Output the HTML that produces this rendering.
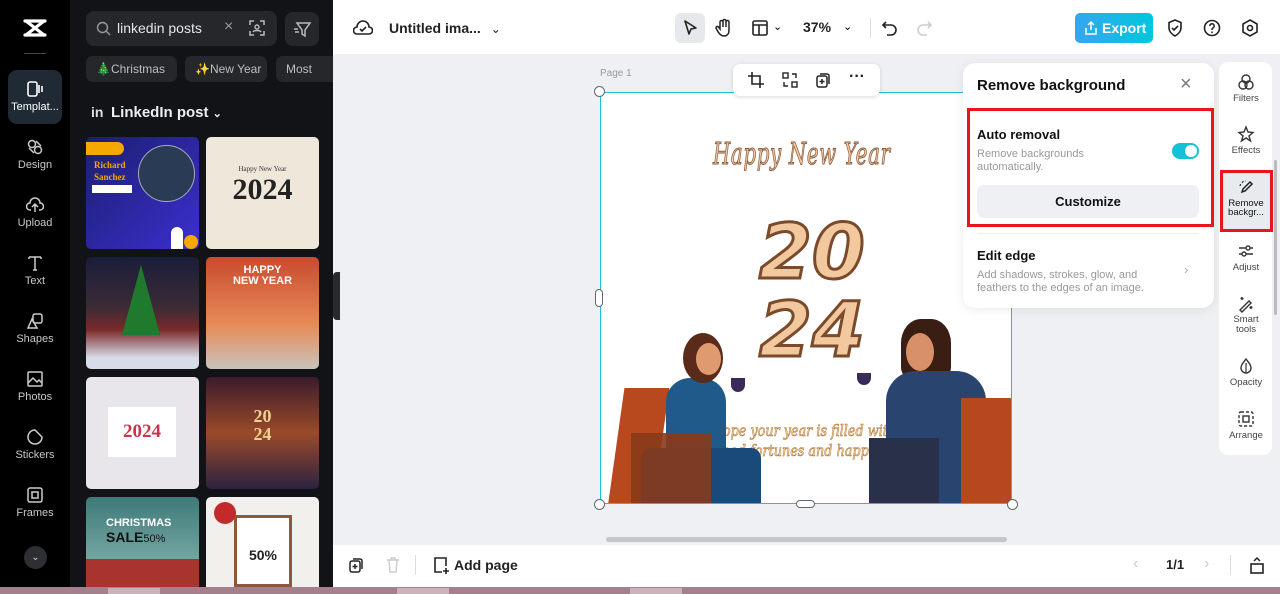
<!DOCTYPE html>
<html><head><meta charset="utf-8"><style>
*{box-sizing:border-box;margin:0;padding:0}
body{width:1280px;height:594px;overflow:hidden;position:relative;font-family:"Liberation Sans",sans-serif;background:#eef0f3}
.abs{position:absolute}
.rail{left:0;top:0;width:70px;height:587px;background:#000}
.panel{left:70px;top:0;width:263px;height:587px;background:#121316}
.ri{position:absolute;left:0;width:70px;text-align:center;color:#c8c8cc;font-size:11px}
.ri svg{display:block;margin:0 auto 3px}
.chip{position:absolute;top:56px;height:26px;background:#26272b;border-radius:7px;color:#bdbdc2;font-size:12px;line-height:26px;padding-left:10px}
.th{position:absolute;width:113px;height:112px;border-radius:5px;overflow:hidden}
.top{left:333px;top:0;width:947px;height:54px;background:#fff}
.bot{left:333px;top:545px;width:947px;height:42px;background:#fff}
.task{left:0;top:587px;width:1280px;height:7px;background:#a4808e}
.tool{position:absolute;width:50px;text-align:center;font-size:9.5px;color:#444}
.tool svg{display:block;margin:0 auto 2px}
</style></head><body>
<div class="abs" style="left:0;top:0;width:1280px;height:2px;background:#555"></div>
<div class="abs rail">
 <svg class="abs" style="left:22px;top:18px" width="26" height="20" viewBox="0 0 26 20"><path d="M3 3h20M3 17h20M4 3l18 14M22 3L4 17" fill="none" stroke="#fff" stroke-width="3.2" stroke-linejoin="round" stroke-linecap="round"/></svg>
 <div class="abs" style="left:24px;top:53px;width:22px;height:1px;background:#444"></div>
 <div class="abs" style="left:8px;top:70px;width:54px;height:54px;background:#1f2a35;border-radius:9px"></div>
 <div class="ri" style="top:80px;color:#fff"><svg width="18" height="18" viewBox="0 0 18 18"><rect x="2" y="2" width="9" height="14" rx="2" fill="none" stroke="#fff" stroke-width="1.6"/><path d="M13 5v8M16 6v6" stroke="#fff" stroke-width="1.6"/></svg>Templat...</div>
 <div class="ri" style="top:138px"><svg width="18" height="18" viewBox="0 0 18 18"><circle cx="6" cy="6" r="3.5" fill="none" stroke="#ccc" stroke-width="1.5"/><circle cx="12" cy="12" r="3.5" fill="none" stroke="#ccc" stroke-width="1.5"/><path d="M10 3l5 5M3 10l5 5" stroke="#ccc" stroke-width="1.5"/></svg>Design</div>
 <div class="ri" style="top:196px"><svg width="18" height="18" viewBox="0 0 18 18"><path d="M5 14H4a3.5 3.5 0 0 1 0-7 5 5 0 0 1 10 0 3.5 3.5 0 0 1 0 7h-1M9 16V9M6 11l3-3 3 3" fill="none" stroke="#ccc" stroke-width="1.5"/></svg>Upload</div>
 <div class="ri" style="top:254px"><svg width="18" height="18" viewBox="0 0 18 18"><path d="M3 3h12M9 3v13M3 3v2M15 3v2M7 16h4" fill="none" stroke="#ccc" stroke-width="1.5"/></svg>Text</div>
 <div class="ri" style="top:312px"><svg width="18" height="18" viewBox="0 0 18 18"><rect x="7" y="2" width="9" height="9" rx="2" fill="none" stroke="#ccc" stroke-width="1.5"/><path d="M6 7l-4 9h9z" fill="none" stroke="#ccc" stroke-width="1.5"/></svg>Shapes</div>
 <div class="ri" style="top:370px"><svg width="18" height="18" viewBox="0 0 18 18"><rect x="2" y="2" width="14" height="14" rx="1" fill="none" stroke="#ccc" stroke-width="1.5"/><path d="M2 13l5-5 4 4 2-2 3 3" fill="none" stroke="#ccc" stroke-width="1.5"/></svg>Photos</div>
 <div class="ri" style="top:428px"><svg width="18" height="18" viewBox="0 0 18 18"><path d="M9 2a7 7 0 1 0 7 7l-7-7z" fill="none" stroke="#ccc" stroke-width="1.5"/></svg>Stickers</div>
 <div class="ri" style="top:486px"><svg width="18" height="18" viewBox="0 0 18 18"><rect x="2" y="2" width="14" height="14" rx="2" fill="none" stroke="#ccc" stroke-width="1.5"/><rect x="6" y="6" width="6" height="6" fill="none" stroke="#ccc" stroke-width="1.5"/></svg>Frames</div>
 <div class="abs" style="left:24px;top:546px;width:23px;height:23px;border-radius:50%;background:#2e2f33;color:#ccc;font-size:10px;text-align:center;line-height:23px">⌄</div>
</div>
<div class="abs panel">
 <div class="abs" style="left:16px;top:11px;width:191px;height:35px;background:#26272b;border-radius:8px"></div>
 <svg class="abs" style="left:26px;top:21px" width="15" height="15" viewBox="0 0 15 15"><circle cx="6.5" cy="6.5" r="5" fill="none" stroke="#999" stroke-width="1.4"/><path d="M10 10l4 4" stroke="#999" stroke-width="1.4"/></svg>
 <div class="abs" style="left:47px;top:20px;color:#e6e6ea;font-size:14px">linkedin posts</div>
 <div class="abs" style="left:154px;top:18px;color:#999;font-size:16px">×</div>
 <svg class="abs" style="left:178px;top:19px" width="18" height="18" viewBox="0 0 18 18"><path d="M2 6V2h4M12 2h4v4M16 12v4h-4M6 16H2v-4" fill="none" stroke="#bbb" stroke-width="1.5"/><circle cx="9" cy="8" r="2" fill="none" stroke="#bbb" stroke-width="1.4"/><path d="M5 13c1-2 7-2 8 0" fill="none" stroke="#bbb" stroke-width="1.4"/></svg>
 <div class="abs" style="left:215px;top:12px;width:34px;height:34px;background:#26272b;border-radius:8px"></div>
 <svg class="abs" style="left:222px;top:19px" width="20" height="20" viewBox="0 0 20 20"><path d="M5 4h13l-5 7v6l-3-2v-4zM2 10h4M3 13h4" fill="none" stroke="#bbb" stroke-width="1.5"/></svg>
 <div class="chip" style="left:16px;width:91px"><span style="color:#3c3">🎄</span>Christmas</div>
 <div class="chip" style="left:115px;width:82px">✨New Year</div>
 <div class="chip" style="left:206px;width:57px;border-radius:7px 0 0 7px">Most</div>
 <div class="abs" style="left:21px;top:104px;color:#ddd;font-weight:bold;font-size:14px">in</div>
 <div class="abs" style="left:41px;top:104px;color:#eee;font-weight:bold;font-size:15px">LinkedIn post <span style="font-size:11px">⌄</span></div>
 <div class="th" style="left:16px;top:137px;background:linear-gradient(135deg,#1b1f6e,#3b2fd0)"><div class="abs" style="left:0;top:5px;width:38px;height:13px;background:#f5a800;border-radius:0 7px 7px 0"></div><div class="abs" style="left:8px;top:22px;color:#f5a800;font:bold 9px 'Liberation Serif',serif;line-height:12px">Richard<br>Sanchez</div><div class="abs" style="left:6px;top:48px;width:40px;height:8px;background:#fff"></div><div class="abs" style="left:52px;top:8px;width:57px;height:57px;border-radius:50%;background:#2a3b55;border:1px solid #aab"></div><div class="abs" style="left:85px;top:90px;width:12px;height:22px;background:#fff;border-radius:6px 6px 0 0"></div><div class="abs" style="left:98px;top:98px;width:14px;height:14px;background:#f5a800;border-radius:50%"></div></div>
 <div class="th" style="left:136px;top:137px;background:#efe7d9"><div class="abs" style="left:0;top:36px;width:113px;text-align:center;font:bold 30px 'Liberation Serif',serif;color:#222">2024</div><div class="abs" style="left:0;top:28px;width:113px;text-align:center;font:7px 'Liberation Serif',serif;color:#333">Happy New Year</div></div>
 <div class="th" style="left:16px;top:257px;background:linear-gradient(#1a1d3a 0%,#3b2b35 45%,#7a2a2a 65%,#d8dbe8 90%)"><div class="abs" style="left:36px;top:8px;border-left:19px solid transparent;border-right:19px solid transparent;border-bottom:70px solid #1f7a2d"></div></div>
 <div class="th" style="left:136px;top:257px;background:linear-gradient(#c94a30,#e68a55 60%,#c9c3bb)"><div class="abs" style="left:0;top:8px;width:113px;text-align:center;color:#fff;font:bold 11px 'Liberation Sans';line-height:11px">HAPPY<br>NEW YEAR</div></div>
 <div class="th" style="left:16px;top:377px;background:#e8e6ea"><div class="abs" style="left:22px;top:30px;width:68px;height:50px;background:#fff"></div><div class="abs" style="left:22px;top:44px;width:68px;text-align:center;font:bold 19px 'Liberation Serif',serif;color:#c8364e">2024</div></div>
 <div class="th" style="left:136px;top:377px;background:linear-gradient(#3b1b2c,#9a4a2a 50%,#2c2240)"><div class="abs" style="left:0;top:30px;width:113px;text-align:center;font:bold 18px 'Liberation Serif',serif;color:#f0d090;line-height:18px">20<br>24</div></div>
 <div class="th" style="left:16px;top:497px;height:90px;border-radius:5px 5px 0 0;background:linear-gradient(#3d7a78,#8db8b5)"><div class="abs" style="left:20px;top:20px;color:#fff;font:bold 11px 'Liberation Sans'">CHRISTMAS</div><div class="abs" style="left:20px;top:32px;color:#111;font:bold 14px 'Liberation Sans'">SALE<span style="font-weight:normal;font-size:11px">50%</span></div><div class="abs" style="left:0;top:62px;width:113px;height:28px;background:#a8342e"></div></div>
 <div class="th" style="left:136px;top:497px;height:90px;border-radius:5px 5px 0 0;background:#f2f0ec"><div class="abs" style="left:28px;top:18px;width:58px;height:72px;border:3px solid #8a5a3a;background:#fff"></div><div class="abs" style="left:8px;top:5px;width:22px;height:22px;border-radius:50%;background:#c42a2a"></div><div class="abs" style="left:28px;top:50px;width:58px;text-align:center;font:bold 14px 'Liberation Sans';color:#222">50%</div></div>
 <div class="abs" style="left:263px;top:272px;width:7px;height:48px;background:#2a2a2e;border-radius:4px 0 0 4px"></div>
</div>
<div class="abs top">
 <svg class="abs" style="left:20px;top:18px" width="20" height="18" viewBox="0 0 20 18"><path d="M5 16H4a3.5 3.5 0 0 1 0-7 6 6 0 0 1 12 0 3.5 3.5 0 0 1 0 7H5z" fill="none" stroke="#222" stroke-width="1.6"/><path d="M7 11l2 2 4-4" fill="none" stroke="#222" stroke-width="1.6"/></svg>
 <div class="abs" style="left:56px;top:20px;font-size:14px;font-weight:bold;color:#222">Untitled ima... <span style="font-weight:normal;font-size:12px;margin-left:6px">⌄</span></div>
 <div class="abs" style="left:342px;top:13px;width:30px;height:30px;background:#e6e8ec;border-radius:6px"></div>
 <svg class="abs" style="left:349px;top:19px" width="17" height="18" viewBox="0 0 17 18"><path d="M3 2l11 7-5 1-2 5z" fill="none" stroke="#222" stroke-width="1.6" stroke-linejoin="round"/></svg>
 <svg class="abs" style="left:382px;top:18px" width="18" height="20" viewBox="0 0 18 20"><path d="M5 11V4a1.5 1.5 0 0 1 3 0v5V3a1.5 1.5 0 0 1 3 0v6V4a1.5 1.5 0 0 1 3 0v8c0 4-2 6-5 6s-5-2-7-6l-1-2a1.4 1.4 0 0 1 2.5-1z" fill="none" stroke="#222" stroke-width="1.5"/></svg>
 <svg class="abs" style="left:418px;top:19px" width="18" height="18" viewBox="0 0 18 18"><rect x="2" y="2" width="14" height="14" rx="1.5" fill="none" stroke="#222" stroke-width="1.6"/><path d="M2 6h14M8 6v10" stroke="#222" stroke-width="1.6"/></svg>
 <div class="abs" style="left:440px;top:20px;font-size:11px">⌄</div>
 <div class="abs" style="left:470px;top:19px;font-size:14px;font-weight:bold;color:#222">37%</div>
 <div class="abs" style="left:510px;top:20px;font-size:11px">⌄</div>
 <div class="abs" style="left:537px;top:18px;width:1px;height:20px;background:#ddd"></div>
 <svg class="abs" style="left:548px;top:19px" width="18" height="18" viewBox="0 0 18 18"><path d="M5 3L2 6l3 3M2 6h8a5 5 0 0 1 0 10H6" fill="none" stroke="#222" stroke-width="1.6"/></svg>
 <svg class="abs" style="left:582px;top:19px" width="18" height="18" viewBox="0 0 18 18"><path d="M13 3l3 3-3 3M16 6H8a5 5 0 0 0 0 10h4" fill="none" stroke="#ccc" stroke-width="1.6"/></svg>
 <div class="abs" style="left:742px;top:13px;width:78px;height:30px;border-radius:5px;background:linear-gradient(90deg,#36a6f0,#00c7dd);color:#fff;font-size:14px;font-weight:bold;line-height:30px;padding-left:27px">Export</div>
 <svg class="abs" style="left:751px;top:20px" width="14" height="16" viewBox="0 0 14 16"><path d="M7 10V2M4 5l3-3 3 3M2 8v6h10V8" fill="none" stroke="#fff" stroke-width="1.5"/></svg>
 <svg class="abs" style="left:833px;top:18px" width="18" height="20" viewBox="0 0 18 20"><path d="M9 2l6 2.5v5c0 4-3 7-6 8.5C6 16.5 3 13.5 3 9.5v-5z" fill="none" stroke="#222" stroke-width="1.6"/><path d="M6 10l2 2 4-4" fill="none" stroke="#222" stroke-width="1.6"/></svg>
 <svg class="abs" style="left:870px;top:19px" width="18" height="18" viewBox="0 0 18 18"><circle cx="9" cy="9" r="7.5" fill="none" stroke="#222" stroke-width="1.6"/><path d="M6.8 7a2.2 2.2 0 1 1 3 2c-.8.4-.8 1-.8 2" fill="none" stroke="#222" stroke-width="1.5"/><circle cx="9" cy="13.3" r=".9" fill="#222"/></svg>
 <svg class="abs" style="left:908px;top:18px" width="18" height="20" viewBox="0 0 18 20"><path d="M9 2l7 4v8l-7 4-7-4V6z" fill="none" stroke="#222" stroke-width="1.6"/><circle cx="9" cy="10" r="2.5" fill="none" stroke="#222" stroke-width="1.6"/></svg>
</div>
<!-- canvas -->
<div class="abs" style="left:600px;top:68px;font-size:10px;color:#999">Page 1</div>
<div class="abs" style="left:600px;top:92px;width:412px;height:412px;background:#fff;border:1.5px solid #1ec0d8;overflow:hidden">
 <div class="abs" style="left:112px;top:44px;font:30px 'DejaVu Serif',serif;font-style:italic;color:#f2c8a2;-webkit-text-stroke:1px #8a5a3a;letter-spacing:1px;transform:scaleX(.66);transform-origin:left;white-space:nowrap">Happy New Year</div>
 <div class="abs" style="left:158px;top:120px;font:bold italic 76px 'DejaVu Sans',sans-serif;color:#f2c89e;-webkit-text-stroke:3px #7a4a2a;line-height:78px">20<br>24</div>
 <div class="abs" style="left:105px;top:328px;font:italic 16px 'DejaVu Serif',serif;color:#fbe0b0;-webkit-text-stroke:.6px #b07030;text-align:center;line-height:20px;transform:scaleX(.8);transform-origin:left;white-space:nowrap">Hope your year is filled with<br>&nbsp;&nbsp;good fortunes and happiness</div>
 <div class="abs" style="left:15px;top:295px;width:45px;height:120px;background:#b8481e;transform:skewX(-8deg)"></div>
 <div class="abs" style="left:65px;top:285px;width:60px;height:130px;background:#1f5a8a;border-radius:24px 24px 0 0"></div>
 <div class="abs" style="left:82px;top:240px;width:40px;height:50px;background:#5a2a1a;border-radius:50%"></div>
 <div class="abs" style="left:95px;top:250px;width:25px;height:32px;background:#e09a70;border-radius:50%"></div>
 <div class="abs" style="left:40px;top:355px;width:120px;height:57px;background:#1a4a7a;border-radius:10px 10px 0 0"></div>
 <div class="abs" style="left:30px;top:340px;width:80px;height:70px;background:#8a3a1a;opacity:.9"></div>
 <div class="abs" style="left:300px;top:226px;width:50px;height:60px;background:#3a1e14;border-radius:40% 40% 20% 20%"></div>
 <div class="abs" style="left:305px;top:240px;width:28px;height:38px;background:#d89068;border-radius:50%"></div>
 <div class="abs" style="left:285px;top:278px;width:100px;height:134px;background:#2a4470;border-radius:30px 30px 0 0"></div>
 <div class="abs" style="left:268px;top:345px;width:70px;height:67px;background:#28304a"></div>
 <div class="abs" style="left:360px;top:305px;width:50px;height:107px;background:#b5481e"></div>
 <div class="abs" style="left:130px;top:285px;width:14px;height:14px;background:#3a2a5a;border-radius:0 0 7px 7px"></div>
 <div class="abs" style="left:256px;top:280px;width:14px;height:12px;background:#3a2a5a;border-radius:0 0 7px 7px"></div>
</div>
<div class="abs" style="left:594px;top:86px;width:11px;height:11px;border-radius:50%;background:#fff;border:1px solid #666"></div>
<div class="abs" style="left:594px;top:499px;width:11px;height:11px;border-radius:50%;background:#fff;border:1px solid #666"></div>
<div class="abs" style="left:1007px;top:499px;width:11px;height:11px;border-radius:50%;background:#fff;border:1px solid #666"></div>
<div class="abs" style="left:595px;top:289px;width:8px;height:18px;border-radius:4px;background:#fff;border:1px solid #666"></div>
<div class="abs" style="left:796px;top:500px;width:19px;height:8px;border-radius:4px;background:#fff;border:1px solid #666"></div>
<div class="abs" style="left:733px;top:64px;width:147px;height:32px;background:#fff;border-radius:7px;box-shadow:0 1px 4px rgba(0,0,0,.15)"></div>
<svg class="abs" style="left:747px;top:71px" width="18" height="18" viewBox="0 0 18 18"><path d="M5 1v12h12M1 5h12v12" fill="none" stroke="#222" stroke-width="1.6"/></svg>
<svg class="abs" style="left:781px;top:71px" width="18" height="18" viewBox="0 0 18 18"><rect x="2" y="2" width="5" height="5" fill="none" stroke="#222" stroke-width="1.4"/><rect x="11" y="11" width="5" height="5" fill="none" stroke="#222" stroke-width="1.4"/><path d="M11 3h4v4M7 15H3v-4" fill="none" stroke="#222" stroke-width="1.4"/></svg>
<svg class="abs" style="left:814px;top:71px" width="18" height="18" viewBox="0 0 18 18"><rect x="3" y="5" width="10" height="11" rx="2" fill="none" stroke="#222" stroke-width="1.5"/><path d="M6 3h7a2 2 0 0 1 2 2v8M8 8v5M5.5 10.5h5" fill="none" stroke="#222" stroke-width="1.5"/></svg>
<div class="abs" style="left:849px;top:68px;font-size:16px;font-weight:bold;color:#222">···</div>
<div class="abs" style="left:963px;top:63px;width:251px;height:245px;background:#fff;border-radius:12px;box-shadow:0 2px 10px rgba(0,0,0,.08)"></div>
<div class="abs" style="left:977px;top:77px;font-size:15px;font-weight:bold;color:#111">Remove background</div>
<div class="abs" style="left:1180px;top:73px;font-size:20px;color:#777;font-weight:lighter">×</div>
<div class="abs" style="left:967px;top:108px;width:247px;height:119px;border:3px solid #e8141e"></div>
<div class="abs" style="left:977px;top:127px;font-size:13px;font-weight:bold;color:#111">Auto removal</div>
<div class="abs" style="left:977px;top:148px;font-size:11px;color:#999;line-height:13px">Remove backgrounds<br>automatically.</div>
<div class="abs" style="left:1172px;top:143px;width:27px;height:16px;border-radius:8px;background:#14c2d8"></div>
<div class="abs" style="left:1185px;top:145px;width:12px;height:12px;border-radius:50%;background:#fff"></div>
<div class="abs" style="left:977px;top:185px;width:222px;height:33px;border-radius:7px;background:#eef0f3;text-align:center;line-height:33px;font-size:13px;font-weight:bold;color:#111">Customize</div>
<div class="abs" style="left:977px;top:233px;width:222px;height:1px;background:#eee"></div>
<div class="abs" style="left:977px;top:248px;font-size:13px;font-weight:bold;color:#111">Edit edge</div>
<div class="abs" style="left:977px;top:269px;font-size:11px;color:#999;line-height:13px">Add shadows, strokes, glow, and<br>feathers to the edges of an image.</div>
<div class="abs" style="left:1184px;top:262px;font-size:13px;color:#aaa">›</div>
<div class="abs" style="left:1219px;top:62px;width:53px;height:393px;background:#fff;border-radius:9px"></div>
<div class="abs" style="left:1274px;top:160px;width:3px;height:155px;background:#bbb;border-radius:2px"></div>
<div class="tool" style="left:1221px;top:73px"><svg width="18" height="18" viewBox="0 0 18 18"><circle cx="9" cy="6" r="4" fill="none" stroke="#333" stroke-width="1.4"/><circle cx="6" cy="12" r="4" fill="none" stroke="#333" stroke-width="1.4"/><circle cx="12" cy="12" r="4" fill="none" stroke="#333" stroke-width="1.4"/></svg>Filters</div>
<div class="tool" style="left:1221px;top:125px"><svg width="18" height="18" viewBox="0 0 18 18"><path d="M9 2l2 5 5 .5-4 3.5 1.5 5L9 13l-4.5 3L6 11 2 7.5 7 7z" fill="none" stroke="#333" stroke-width="1.4"/></svg>Effects</div>
<div class="abs" style="left:1220px;top:170px;width:53px;height:62px;border:3px solid #e8141e;background:#e8ebee"></div>
<div class="tool" style="left:1221px;top:179px;color:#111;line-height:9px"><svg width="18" height="18" viewBox="0 0 18 18"><path d="M13 3l2 2-7 7-3 1 1-3z" fill="none" stroke="#222" stroke-width="1.5"/><path d="M3 7a6 6 0 0 1 6-5" fill="none" stroke="#222" stroke-width="1.2" stroke-dasharray="2 2"/></svg>Remove<br>backgr...</div>
<div class="tool" style="left:1221px;top:242px"><svg width="18" height="18" viewBox="0 0 18 18"><path d="M2 6h14M2 12h14" stroke="#333" stroke-width="1.4"/><circle cx="11" cy="6" r="2" fill="#fff" stroke="#333" stroke-width="1.4"/><circle cx="7" cy="12" r="2" fill="#fff" stroke="#333" stroke-width="1.4"/></svg>Adjust</div>
<div class="tool" style="left:1221px;top:295px;line-height:10px"><svg width="18" height="18" viewBox="0 0 18 18"><path d="M3 15l9-9 2 2-9 9zM5 2v3M3.5 3.5h3M14 11v3M12.5 12.5h3" fill="none" stroke="#333" stroke-width="1.4"/></svg>Smart<br>tools</div>
<div class="tool" style="left:1221px;top:357px"><svg width="18" height="18" viewBox="0 0 18 18"><path d="M9 2c3 4 5 6 5 9a5 5 0 0 1-10 0c0-3 2-5 5-9z" fill="none" stroke="#333" stroke-width="1.4"/><path d="M9 6v10" stroke="#333" stroke-width="1.2"/></svg>Opacity</div>
<div class="tool" style="left:1221px;top:410px"><svg width="18" height="18" viewBox="0 0 18 18"><rect x="2" y="2" width="14" height="14" rx="2" fill="none" stroke="#333" stroke-width="1.4" stroke-dasharray="3 2"/><rect x="6" y="6" width="6" height="6" fill="none" stroke="#333" stroke-width="1.4"/></svg>Arrange</div>
<div class="abs" style="left:606px;top:537px;width:401px;height:5px;border-radius:3px;background:#c4c7ca"></div>
<div class="abs bot">
 <svg class="abs" style="left:14px;top:11px" width="18" height="18" viewBox="0 0 18 18"><rect x="3" y="5" width="10" height="11" rx="2" fill="none" stroke="#222" stroke-width="1.5"/><path d="M6 3h7a2 2 0 0 1 2 2v8M8 8v5M5.5 10.5h5" fill="none" stroke="#222" stroke-width="1.5"/></svg>
 <svg class="abs" style="left:52px;top:11px" width="16" height="18" viewBox="0 0 16 18"><path d="M2 4h12M6 4V2h4v2M4 4l1 12h6l1-12" fill="none" stroke="#ccc" stroke-width="1.4"/></svg>
 <div class="abs" style="left:82px;top:10px;width:1px;height:20px;background:#ddd"></div>
 <svg class="abs" style="left:99px;top:11px" width="18" height="20" viewBox="0 0 18 20"><path d="M10 16H3V2h11v8" fill="none" stroke="#222" stroke-width="1.6"/><path d="M14 12v6M11 15h6" stroke="#222" stroke-width="1.6"/></svg>
 <div class="abs" style="left:121px;top:12px;font-size:14px;font-weight:bold;color:#222">Add page</div>
 <div class="abs" style="left:800px;top:10px;font-size:16px;color:#ccc">‹</div>
 <div class="abs" style="left:833px;top:12px;font-size:13px;font-weight:bold;color:#222">1/1</div>
 <div class="abs" style="left:871px;top:10px;font-size:16px;color:#ccc">›</div>
 <div class="abs" style="left:897px;top:10px;width:1px;height:20px;background:#ddd"></div>
 <svg class="abs" style="left:916px;top:10px" width="16" height="20" viewBox="0 0 16 20"><rect x="2" y="9" width="12" height="9" fill="none" stroke="#222" stroke-width="1.6"/><path d="M5 6l3-3 3 3" fill="none" stroke="#222" stroke-width="1.5"/></svg>
</div>
<div class="abs task"></div>
<div class="abs" style="left:108px;top:588px;width:52px;height:6px;background:#c9b3bc"></div>
<div class="abs" style="left:397px;top:588px;width:52px;height:6px;background:#c9b3bc"></div>
<div class="abs" style="left:630px;top:588px;width:52px;height:6px;background:#c9b3bc"></div>
</body></html>
